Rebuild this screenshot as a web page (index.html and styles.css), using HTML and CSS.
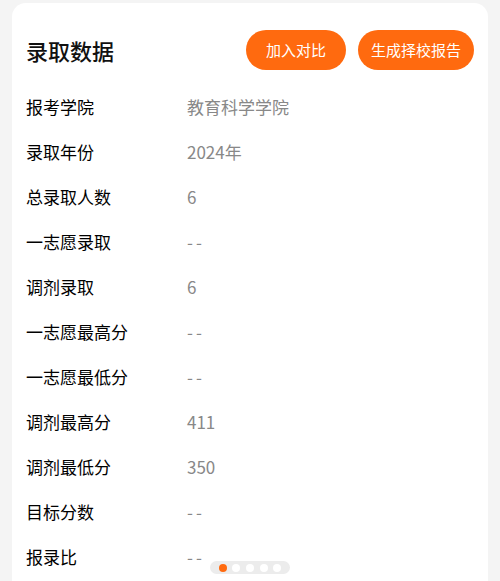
FILE: index.html
```html
<!DOCTYPE html>
<html lang="zh">
<head>
<meta charset="utf-8">
<link rel="stylesheet" href="styles.css">
</head>
<body>
<div class="card">
  <div class="header">
    <h1 class="title">录取数据</h1>
    <div class="actions">
      <button class="btn btn-compare">加入对比</button>
      <button class="btn btn-report">生成择校报告</button>
    </div>
  </div>
  <div class="rows">
    <div class="row"><span class="label">报考学院</span><span class="value">教育科学学院</span></div>
    <div class="row"><span class="label">录取年份</span><span class="value">2024年</span></div>
    <div class="row"><span class="label">总录取人数</span><span class="value">6</span></div>
    <div class="row"><span class="label">一志愿录取</span><span class="value dash">--</span></div>
    <div class="row"><span class="label">调剂录取</span><span class="value">6</span></div>
    <div class="row"><span class="label">一志愿最高分</span><span class="value dash">--</span></div>
    <div class="row"><span class="label">一志愿最低分</span><span class="value dash">--</span></div>
    <div class="row"><span class="label">调剂最高分</span><span class="value">411</span></div>
    <div class="row"><span class="label">调剂最低分</span><span class="value">350</span></div>
    <div class="row"><span class="label">目标分数</span><span class="value dash">--</span></div>
    <div class="row"><span class="label">报录比</span><span class="value dash">--</span></div>
  </div>
</div>
<div class="pager">
  <span class="dot active"></span>
  <span class="dot"></span>
  <span class="dot"></span>
  <span class="dot"></span>
  <span class="dot"></span>
</div>
</body>
</html>
```
FILE: styles.css
```css
html, body {
  margin: 0;
  padding: 0;
}
body {
  background: #f4f4f4;
  font-family: "Noto Sans CJK SC", "Noto Sans", sans-serif;
  width: 500px;
  height: 581px;
  overflow: hidden;
}
.card {
  background: #fff;
  margin: 3px 12px 0 12px;
  border-radius: 14px 14px 0 0;
  padding: 27px 14px 0 14px;
  height: 578px;
  overflow: hidden;
  box-sizing: border-box;
}
.header {
  display: flex;
  align-items: center;
  justify-content: space-between;
  height: 40px;
}
.title {
  margin: 0;
  font-size: 22px;
  font-weight: 500;
  color: #111;
  line-height: 40px;
}
.actions {
  display: flex;
  gap: 12px;
}
.btn {
  border: none;
  background: #ff6a0f;
  color: #fff;
  height: 40px;
  border-radius: 20px;
  font-family: inherit;
  font-size: 15px;
  padding: 0;
  line-height: 40px;
}
.btn-compare { width: 100px; }
.btn-report { width: 116px; }
.rows {
  margin-top: 14px;
}
.row {
  display: flex;
  height: 45px;
  align-items: center;
}
.label {
  width: 161px;
  font-size: 17px;
  font-weight: 400;
  color: #000;
}
.value {
  font-size: 17px;
  color: #888;
}
.dash {
  letter-spacing: 3px;
}
.pager {
  position: fixed;
  left: 210px;
  top: 561px;
  width: 80px;
  height: 13px;
  border-radius: 7px;
  background: #ececec;
  display: flex;
  align-items: center;
  justify-content: space-evenly;
  padding: 0 3px;
  box-sizing: border-box;
}
.dot {
  width: 8px;
  height: 8px;
  border-radius: 50%;
  background: #fff;
}
.dot.active {
  background: #ff6a0f;
}
```
